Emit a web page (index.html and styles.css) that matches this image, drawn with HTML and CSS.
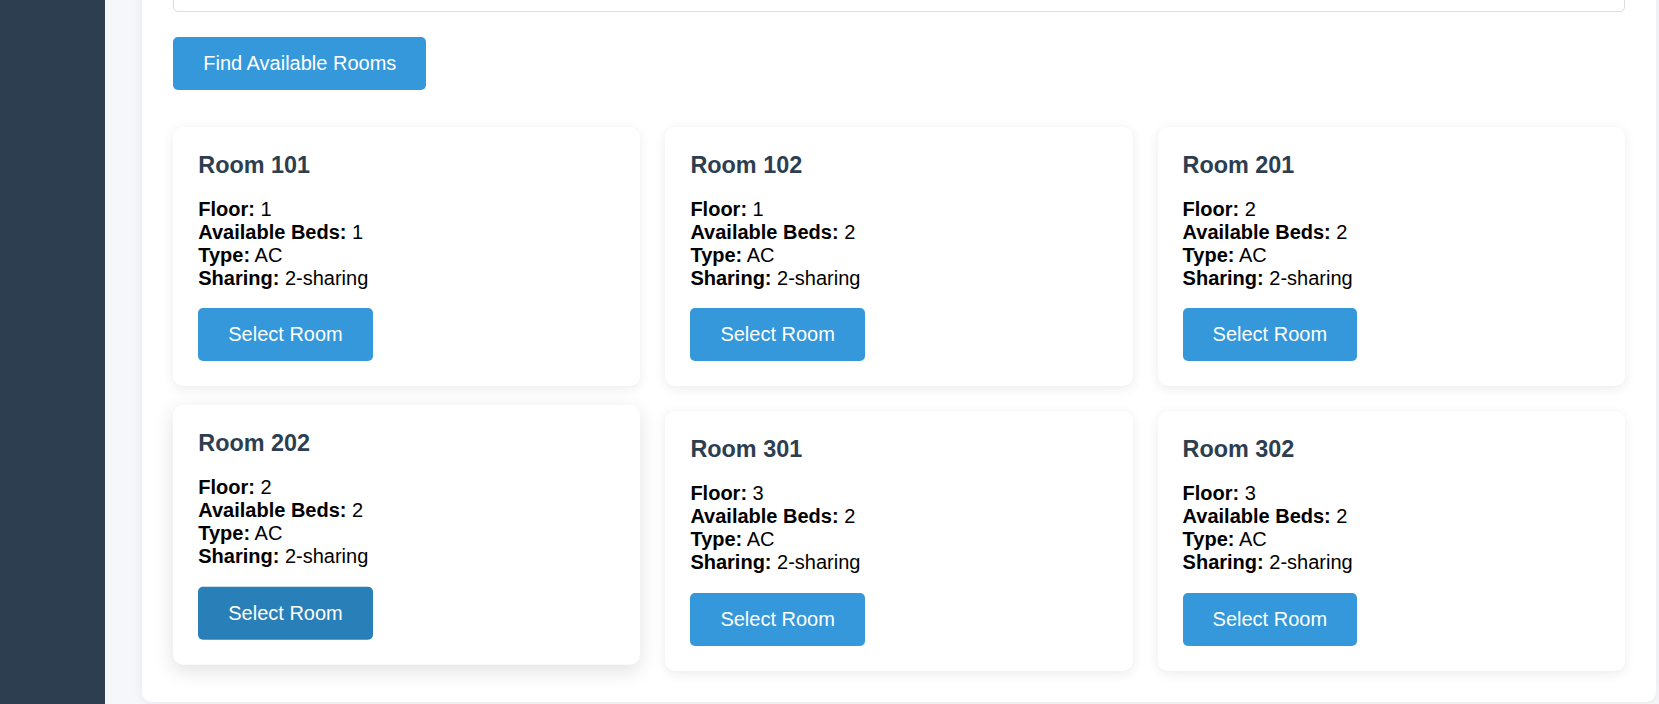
FILE: index.html
```html
<!DOCTYPE html>
<html lang="en">
<head>
<meta charset="utf-8">
<title>Room Booking</title>
<link rel="stylesheet" href="styles.css">
</head>
<body>
<div class="app">
  <aside class="sidebar"></aside>
  <main class="main">
    <section class="panel">
      <div class="form-group">
        <input class="form-input" id="sharing" type="text" aria-label="Sharing preference">
      </div>
      <button class="btn find-btn" type="button">Find Available Rooms</button>
      <div class="room-grid">
        <div class="room-card">
          <h3 class="room-title">Room 101</h3>
          <p class="room-details"><strong>Floor:</strong> 1<br><strong>Available Beds:</strong> 1<br><strong>Type:</strong> AC<br><strong>Sharing:</strong> 2-sharing</p>
          <button class="btn" type="button">Select Room</button>
        </div>
        <div class="room-card">
          <h3 class="room-title">Room 102</h3>
          <p class="room-details"><strong>Floor:</strong> 1<br><strong>Available Beds:</strong> 2<br><strong>Type:</strong> AC<br><strong>Sharing:</strong> 2-sharing</p>
          <button class="btn" type="button">Select Room</button>
        </div>
        <div class="room-card">
          <h3 class="room-title">Room 201</h3>
          <p class="room-details"><strong>Floor:</strong> 2<br><strong>Available Beds:</strong> 2<br><strong>Type:</strong> AC<br><strong>Sharing:</strong> 2-sharing</p>
          <button class="btn" type="button">Select Room</button>
        </div>
        <div class="room-card is-hover">
          <h3 class="room-title">Room 202</h3>
          <p class="room-details"><strong>Floor:</strong> 2<br><strong>Available Beds:</strong> 2<br><strong>Type:</strong> AC<br><strong>Sharing:</strong> 2-sharing</p>
          <button class="btn is-hover" type="button">Select Room</button>
        </div>
        <div class="room-card">
          <h3 class="room-title">Room 301</h3>
          <p class="room-details"><strong>Floor:</strong> 3<br><strong>Available Beds:</strong> 2<br><strong>Type:</strong> AC<br><strong>Sharing:</strong> 2-sharing</p>
          <button class="btn" type="button">Select Room</button>
        </div>
        <div class="room-card">
          <h3 class="room-title">Room 302</h3>
          <p class="room-details"><strong>Floor:</strong> 3<br><strong>Available Beds:</strong> 2<br><strong>Type:</strong> AC<br><strong>Sharing:</strong> 2-sharing</p>
          <button class="btn" type="button">Select Room</button>
        </div>
      </div>
    </section>
  </main>
</div>
</body>
</html>
```

FILE: styles.css
```css
* {
  box-sizing: border-box;
}

html, body {
  margin: 0;
  padding: 0;
}

body {
  font-family: "Liberation Sans", Arial, sans-serif;
  font-size: 20px;
  color: #000;
  background: #f5f7fa;
}

.app {
  display: flex;
  height: 100vh;
  overflow: hidden;
}

.sidebar {
  width: 105px;
  flex-shrink: 0;
  background: #2c3e50;
}

.main {
  flex: 1;
  min-width: 0;
  display: flex;
  flex-direction: column;
  justify-content: flex-end;
  padding: 0 3px 2px 37px;
  background: #f5f7fa;
}

.panel {
  flex-shrink: 0;
  background: #fff;
  border-radius: 10px;
  padding: 31.25px;
  box-shadow: 0 2px 12px rgba(0, 0, 0, 0.06);
}

.form-group {
  margin-bottom: 25px;
}

.form-input {
  display: block;
  width: 100%;
  height: 50px;
  border: 1px solid #dcdcdc;
  border-radius: 5px;
  font: inherit;
  padding: 12px;
}

.btn {
  display: inline-block;
  background: #3498db;
  color: #fff;
  border: none;
  border-radius: 5px;
  padding: 15px 30px;
  font-family: "Liberation Sans", Arial, sans-serif;
  font-size: 20px;
  line-height: normal;
  cursor: pointer;
}

.btn.is-hover {
  background: #2980b9;
}

.room-grid {
  display: grid;
  grid-template-columns: repeat(3, 1fr);
  gap: 25px;
  margin-top: 37px;
}

.room-card {
  background: #fff;
  border-radius: 10px;
  padding: 25px;
  box-shadow: 0 2.5px 12px rgba(0, 0, 0, 0.08);
}

.room-card.is-hover {
  transform: translateY(-6.25px);
  box-shadow: 0 6px 20px rgba(0, 0, 0, 0.12);
}

.room-title {
  margin: 0 0 18.75px;
  font-size: 23.4px;
  font-weight: bold;
  color: #2c3e50;
}

.room-details {
  margin: 0 0 18.75px;
  line-height: normal;
}
```
